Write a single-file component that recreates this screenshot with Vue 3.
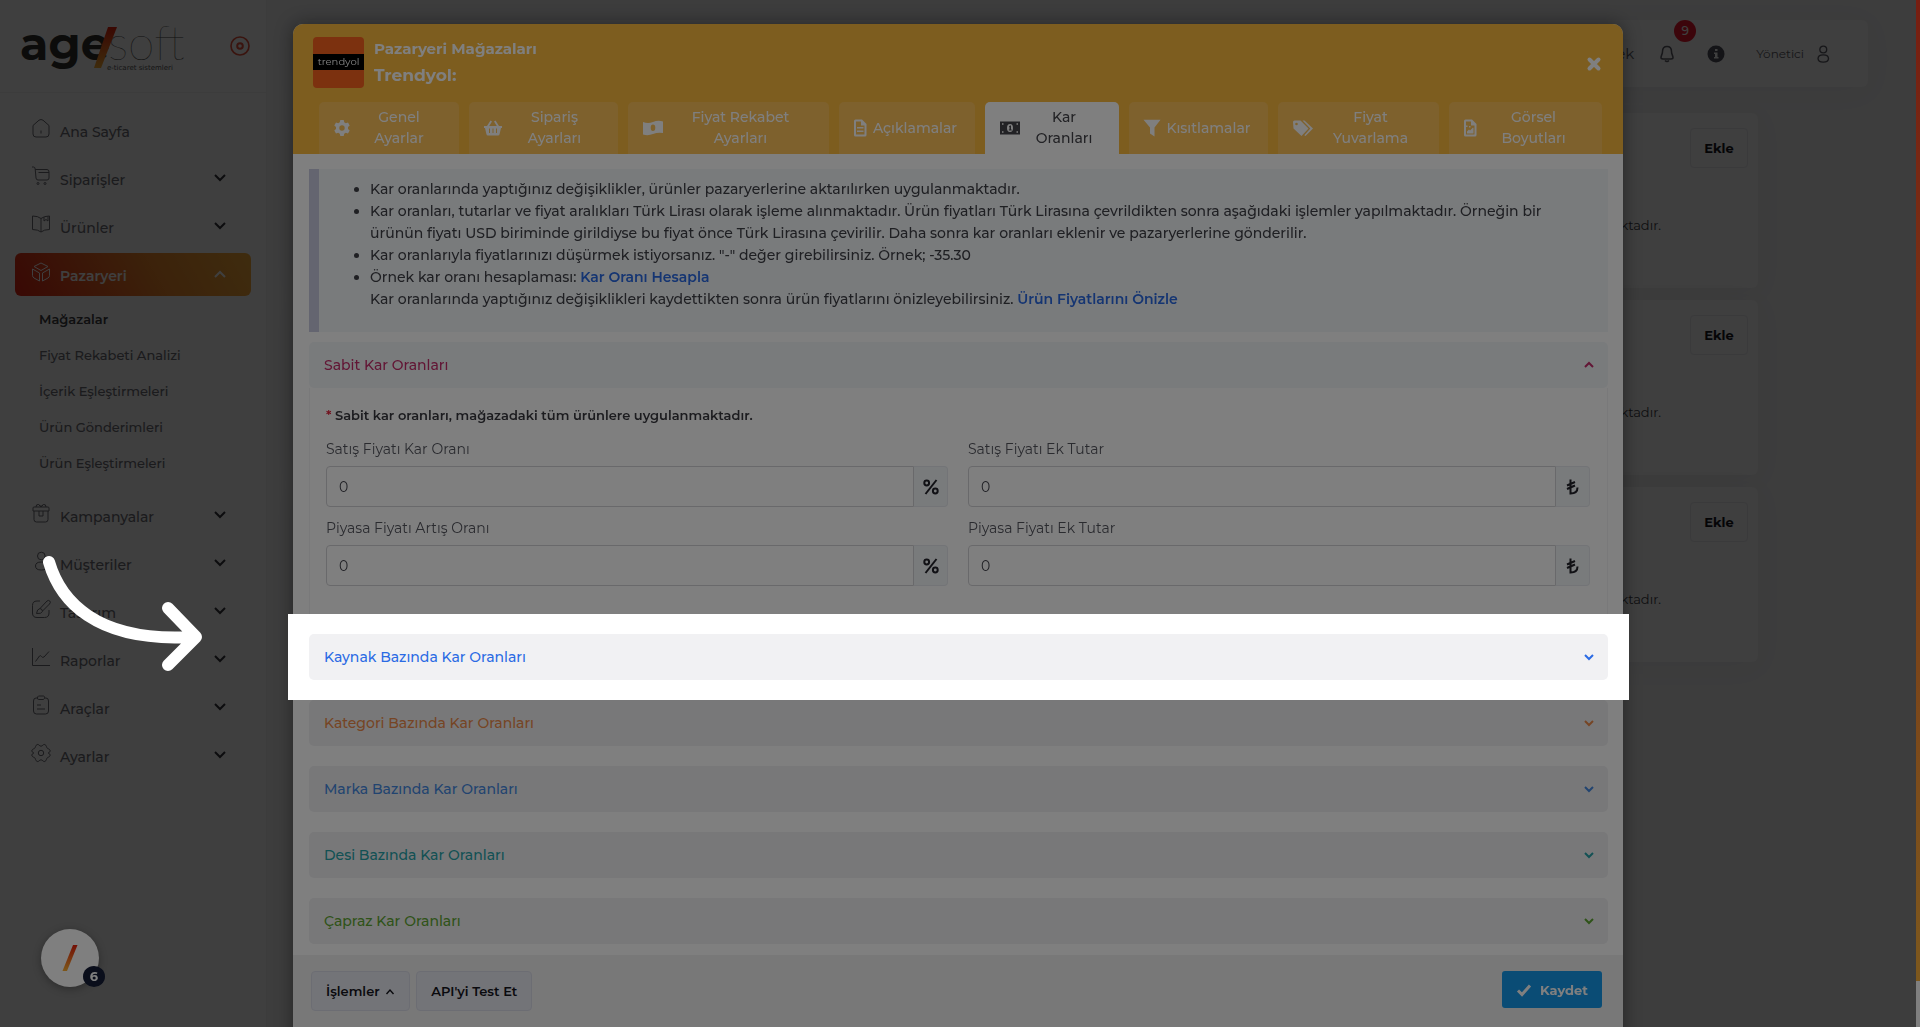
<script setup>
import { ref } from 'vue'

const menuTop = [
  { label: 'Ana Sayfa', icon: 'home' },
  { label: 'Siparişler', icon: 'cart', arrow: 'down' },
  { label: 'Ürünler', icon: 'book', arrow: 'down' },
  { label: 'Pazaryeri', icon: 'box', arrow: 'up', active: true },
]
const subMenu = ['Mağazalar', 'Fiyat Rekabeti Analizi', 'İçerik Eşleştirmeleri', 'Ürün Gönderimleri', 'Ürün Eşleştirmeleri']
const menuBottom = [
  { label: 'Kampanyalar', icon: 'gift', arrow: 'down' },
  { label: 'Müşteriler', icon: 'user', arrow: 'down' },
  { label: 'Tasarım', icon: 'brush', arrow: 'down' },
  { label: 'Raporlar', icon: 'chart', arrow: 'down' },
  { label: 'Araçlar', icon: 'clip', arrow: 'down' },
  { label: 'Ayarlar', icon: 'gear', arrow: 'down' },
]
const lineIcons = {
  home: 'M2 7.500 8 2.200Q10 .8 12 2.200L18 7.500V16Q18 19 15 19H5Q2 19 2 16ZM10 12.500V15.500',
  cart: 'M1 1H2.500Q4 1 4.200 3L5 12Q5.200 14 7 14H16Q18 14 18 12V6Q18 3.500 16 3.500H4.300M7.500 6.500H18M6 17.500a1 1 0 1 0 2 0a1 1 0 1 0-2 0M13 17.500a1 1 0 1 0 2 0a1 1 0 1 0-2 0',
  book: 'M10 4.500Q7 2 1.500 2V15.500Q7 15.500 10 18Q13 15.500 18.500 15.500V2Q13 2 10 4.500V18M13 3V7L15 5.500 17 7V2.500',
  box: 'M10 1 17 4.500 10 8.500 3 4.500ZM1.500 7 8.500 11V19L3 16Q1.500 15 1.500 13.500ZM18.500 7 11.500 11V19L17 16Q18.500 15 18.500 13.500Z',
  gift: 'M2 8H18V5Q18 4 17 4H3Q2 4 2 5ZM3 8V16.500Q3 19 5.500 19H14.500Q17 19 17 16.500V8M8 8V13H12V8M5 4Q5 1 7.500 1.500L10 4 12.500 1.500Q15 1 15 4M8 1.500 10 3.500 12 1.500',
  user: 'M6.500 5a3.800 3.800 0 1 0 7.600 0a3.800 3.800 0 1 0-7.600 0M4.500 15q0-4 5.800-4t5.800 4t-5.800 4t-5.800-4',
  brush: 'M9 2H6Q1.500 2 1.500 6.500V14Q1.500 18.500 6 18.500H13.500Q18 18.500 18 14V11M9 9.500 16 2Q17.500 .8 18.800 2T18.500 5L11.500 12M9 9.500Q11.500 10 11.500 12.500Q10.500 15 5.500 14.500Q6 10 9 9.500Z',
  chart: 'M1.500 1V18.500H19M4.500 14.500 8.500 9Q9.500 8 10.500 9.500T13 10L18 4.500',
  clip: 'M6.500 3H5Q2.500 3 2.500 6V16Q2.500 19 5.500 19H14.500Q17.500 19 17.500 16V6Q17.500 3 15 3H13.500M7.500 1H12.500Q13.500 1 13.500 2.500T12.500 4.500H7.500Q6.500 4.500 6.500 3T7.500 1ZM6 10H10M6 14H14',
  gear: 'M7.300 10a2.700 2.700 0 1 0 5.400 0a2.700 2.700 0 1 0-5.400 0M6.200 1.500C8 1 8.300 3.200 10 3.200S12 1 13.800 1.500S15.600 5.300 16.700 5.600S19.200 6.500 19.200 8S17.300 9 17.300 10S19.200 10.500 19.200 12S17.700 14.100 16.700 14.400S15.500 18 13.800 18.500S11.700 16.800 10 16.800S8 19 6.200 18.500S4.400 14.700 3.300 14.400S.8 13.500 .8 12S2.700 11 2.700 10S.8 9.500 .8 8S2.300 5.900 3.300 5.600S4.500 2 6.200 1.500Z',
}

const tabs = [
  { lines: ['Genel', 'Ayarlar'], icon: 'cog', w: 140 },
  { lines: ['Sipariş', 'Ayarları'], icon: 'basket', w: 149 },
  { lines: ['Fiyat Rekabet', 'Ayarları'], icon: 'money', w: 201 },
  { lines: ['Açıklamalar'], icon: 'file', w: 136 },
  { lines: ['Kar', 'Oranları'], icon: 'bill', w: 134, active: true },
  { lines: ['Kısıtlamalar'], icon: 'funnel', w: 139 },
  { lines: ['Fiyat', 'Yuvarlama'], icon: 'tags', w: 161 },
  { lines: ['Görsel', 'Boyutları'], icon: 'image', w: 153 },
]
const solidIcons = {
  cog: { w: 18, d: 'M7.300 1H10.700L11.200 3.300 12.800 4.200 15 3.500 16.700 6.400 15 8V10L16.700 11.600 15 14.500 12.800 13.800 11.200 14.700 10.700 17H7.300L6.800 14.700 5.200 13.800 3 14.500 1.300 11.600 3 10V8L1.300 6.400 3 3.500 5.200 4.200 6.800 3.300ZM9 6.300a2.700 2.700 0 1 0 0 5.400a2.700 2.700 0 1 0 0-5.400Z' },
  basket: { w: 20, d: 'M4 7 7.500 1.500 9 2.500 6.200 7H13.800L11 2.500 12.500 1.500 16 7H19V9H18L16.600 15Q16.400 16.500 15 16.500H5Q3.600 16.500 3.400 15L2 9H1V7ZM6 9.500V14H7V9.500ZM9.500 9.500V14H10.500V9.500ZM13 9.500V14H14V9.500Z' },
  money: { w: 22, d: 'M1 3Q6 5 11 3T21 2.500V14Q16 13 11 15T1 15.500ZM11 5.500a2.300 3.200 0 1 0 0 6.400a2.300 3.200 0 1 0 0-6.400Z' },
  file: { w: 14, d: 'M2.500 .5H9L13.500 5V16Q13.500 17.500 12 17.500H2.500Q1 17.500 1 16V2Q1 .5 2.500 .5ZM3 2.500V15.500H11.500V6.500H8V2.500ZM4 8H10.500V9.500H4ZM4 11.500H10.500V13H4Z' },
  bill: { w: 22, d: 'M1 2.500H21V15.500H1ZM11 5a3 4 0 1 0 0 8a3 4 0 1 0 0-8ZM10 7.500 11 6.500H12V10.500H12.800V11.500H9.800V10.500H10.500V8H10ZM3 4.300V5.800H4.500V4.300ZM3 12.200V13.700H4.500V12.200ZM17.500 4.300V5.800H19V4.300ZM17.500 12.200V13.700H19V12.200Z' },
  funnel: { w: 18, d: 'M.5 .8H17.500L11.500 8.500V17.500L7 14.500V8.500Z' },
  tags: { w: 22, d: 'M1 3Q1 1.500 2.500 1.500H8.500L16.500 9.500 9.500 17 1.500 9.500ZM4.500 3.700a1.300 1.300 0 1 0 0 2.600a1.300 1.300 0 1 0 0-2.600ZM10.500 1.500H12.500L21 9.500 13.500 17 12.300 16.200 18.300 9.500Z' },
  image: { w: 14, d: 'M2.500 .5H9L13.500 5V16Q13.500 17.500 12 17.500H2.500Q1 17.500 1 16V2Q1 .5 2.500 .5ZM3 2.500V6.500H4.500V8H3V15.500H11.500V6.500H8V2.500ZM4 12.500 6 10.500 7 11.500 10 8.500 10.500 9V14.500H4ZM6 7H7.500V8.500H6Z' },
}

const fields = ref([
  { id: 'sale-rate', label: 'Satış Fiyatı Kar Oranı', unit: 'percent', value: '0' },
  { id: 'sale-extra', label: 'Satış Fiyatı Ek Tutar', unit: 'lira', value: '0' },
  { id: 'market-rate', label: 'Piyasa Fiyatı Artış Oranı', unit: 'percent', value: '0' },
  { id: 'market-extra', label: 'Piyasa Fiyatı Ek Tutar', unit: 'lira', value: '0' },
])
const sections = [
  { label: 'Kaynak Bazında Kar Oranları', tone: 'blue', spot: true },
  { label: 'Kategori Bazında Kar Oranları', tone: 'orange' },
  { label: 'Marka Bazında Kar Oranları', tone: 'sky' },
  { label: 'Desi Bazında Kar Oranları', tone: 'teal' },
  { label: 'Çapraz Kar Oranları', tone: 'green' },
]
</script>

<template>
  <div class="shell">
    <aside class="sidebar">
      <div class="brand">
        <svg class="logo" width="172" height="66" viewBox="0 -7 172 66">
          <defs>
            <linearGradient id="slash" x1="0" y1="0" x2="0" y2="1">
              <stop offset="0" stop-color="#e8200c" />
              <stop offset="1" stop-color="#fbb033" />
            </linearGradient>
          </defs>
          <text x="0" y="40" class="logo-bold">age</text>
          <text x="88" y="40" class="logo-thin">soft</text>
          <path d="M88 7H97L81 48H74Z" fill="url(#slash)" />
          <text x="87" y="50" class="logo-tag">e-ticaret sistemleri</text>
        </svg>
        <svg width="20" height="20" viewBox="0 0 20 20" fill="none" stroke="#e8503a">
          <circle cx="10" cy="10" r="9" stroke-width="1.600" />
          <circle cx="10" cy="10" r="2.800" stroke-width="2" />
        </svg>
      </div>
      <nav class="menu">
        <a v-for="m in menuTop" :key="m.label" href="#" class="item" :class="{ active: m.active }">
          <svg class="mi" viewBox="0 0 20 20"><path :d="lineIcons[m.icon]" /></svg>
          <span>{{ m.label }}</span>
          <svg v-if="m.arrow" class="chev" viewBox="0 0 14 10"><path :d="m.arrow === 'up' ? 'M2 8 7 3 12 8' : 'M2 2 7 7 12 2'" /></svg>
        </a>
        <div class="sub">
          <a v-for="(s, i) in subMenu" :key="s" href="#" :class="{ current: i === 0 }">{{ s }}</a>
        </div>
        <a v-for="m in menuBottom" :key="m.label" href="#" class="item">
          <svg class="mi" viewBox="0 0 20 20"><path :d="lineIcons[m.icon]" /></svg>
          <span>{{ m.label }}</span>
          <svg class="chev" viewBox="0 0 14 10"><path d="M2 2 7 7 12 2" /></svg>
        </a>
      </nav>
    </aside>

    <main class="main">
      <header class="topbar">
        <a href="#" class="support">Destek</a>
        <button class="bell" aria-label="Bildirimler">
          <svg width="16" height="18" viewBox="0 0 16 18"><path d="M8 1.500C4.500 1.500 3.500 4 3.500 6.500C3.500 9.500 2 10.500 2 12.500Q2 14 4 14H12Q14 14 14 12.500C14 10.500 12.500 9.500 12.500 6.500C12.500 4 11.500 1.500 8 1.500ZM6 15.500Q8 17.500 10 15.500" /></svg>
          <span class="count">9</span>
        </button>
        <svg class="info-i" width="18" height="18" viewBox="0 0 18 18"><circle cx="9" cy="9" r="8.500" fill="#50535f" /><path d="M8 4H10.500V6H8ZM7 7.500H10.500V12H11.500V13.500H7V12H8V9H7Z" fill="#fff" /></svg>
        <a href="#" class="account">Yönetici
          <svg width="18" height="18" viewBox="0 0 20 20"><path :d="lineIcons.user" /></svg>
        </a>
      </header>
      <section v-for="n in 3" :key="n" class="store">
        <button class="add">Ekle</button>
        <p>uygulanmaktadır.</p>
      </section>
    </main>
  </div>

  <div class="backdrop"></div>

  <button class="chat" aria-label="Destek">
    <svg width="16" height="28" viewBox="0 0 16 28"><path d="M11 1H15.500L5 27H.5Z" fill="url(#slash)" /></svg>
    <span class="chat-count">6</span>
  </button>
  <div class="scroll"><div class="thumb"></div></div>

  <div class="overlay">
    <div class="modal" role="dialog" aria-label="Pazaryeri Mağazaları">
      <header class="head">
        <div class="title-row">
          <div class="tlogo"><span>trendyol</span></div>
          <div class="titles">
            <h2>Pazaryeri Mağazaları</h2>
            <h1>Trendyol:</h1>
          </div>
          <button class="close" aria-label="Kapat">
            <svg width="16" height="16" viewBox="0 0 16 16"><path d="M3.500 3.500 12.500 12.500M12.500 3.500 3.500 12.500" /></svg>
          </button>
        </div>
        <nav class="tabs">
          <button v-for="t in tabs" :key="t.icon" class="tab" :class="{ on: t.active }" :style="{ flexBasis: t.w + 'px' }">
            <svg :width="solidIcons[t.icon].w" height="18" :viewBox="`0 0 ${solidIcons[t.icon].w} 18`"><path fill-rule="evenodd" :d="solidIcons[t.icon].d" /></svg>
            <span class="tab-text"><span v-for="l in t.lines" :key="l">{{ l }}</span></span>
          </button>
        </nav>
      </header>

      <div class="body">
        <div class="notice">
          <ul>
            <li>Kar oranlarında yaptığınız değişiklikler, ürünler pazaryerlerine aktarılırken uygulanmaktadır.</li>
            <li>Kar oranları, tutarlar ve fiyat aralıkları Türk Lirası olarak işleme alınmaktadır. Ürün fiyatları Türk Lirasına çevrildikten sonra aşağıdaki işlemler yapılmaktadır. Örneğin bir<br>ürünün fiyatı USD biriminde girildiyse bu fiyat önce Türk Lirasına çevirilir. Daha sonra kar oranları eklenir ve pazaryerlerine gönderilir.</li>
            <li>Kar oranlarıyla fiyatlarınızı düşürmek istiyorsanız. "-" değer girebilirsiniz. Örnek; -35.30</li>
            <li>Örnek kar oranı hesaplaması: <a href="#">Kar Oranı Hesapla</a><br>Kar oranlarında yaptığınız değişiklikleri kaydettikten sonra ürün fiyatlarını önizleyebilirsiniz. <a href="#">Ürün Fiyatlarını Önizle</a></li>
          </ul>
        </div>

        <section class="fixed-rates">
          <button class="bar pink open">Sabit Kar Oranları
            <svg class="bchev" viewBox="0 0 12 8"><path d="M2 6 6 2 10 6" /></svg>
          </button>
          <div class="panel">
            <p class="hint"><span>*</span> Sabit kar oranları, mağazadaki tüm ürünlere uygulanmaktadır.</p>
            <div class="grid">
              <div v-for="f in fields" :key="f.id" class="field">
                <label :for="f.id">{{ f.label }}</label>
                <div class="group">
                  <input :id="f.id" v-model="f.value" type="text">
                  <span v-if="f.unit === 'percent'" class="unit pct">
                    <svg width="18" height="18" viewBox="0 0 18 18"><path d="M14.500 2 3.500 16" /><circle cx="4.700" cy="5" r="2.400" /><circle cx="13.300" cy="13" r="2.400" /></svg>
                  </span>
                  <span v-else class="unit">
                    <svg width="14" height="18" viewBox="0 0 14 18"><path d="M4.500 1.500V15.500Q11.500 15.500 11.500 9.500M1 7.500 9 4M1 11 9 7.500" /></svg>
                  </span>
                </div>
              </div>
            </div>
          </div>
        </section>

        <div class="sections">
          <div v-for="s in sections" :key="s.label" class="section" :class="{ spot: s.spot }">
            <button class="bar" :class="s.tone">{{ s.label }}
              <svg class="bchev" viewBox="0 0 12 8"><path d="M2 2 6 6 10 2" /></svg>
            </button>
          </div>
        </div>
      </div>

      <footer class="foot">
        <button class="ghost">İşlemler <svg width="10" height="8" viewBox="0 0 10 8"><path d="M1.500 6 5 2 8.500 6" /></svg></button>
        <button class="ghost">API'yi Test Et</button>
        <button class="save"><svg width="16" height="14" viewBox="0 0 16 14"><path d="M2 7.500 6 11.500 14 2.500" /></svg>Kaydet</button>
      </footer>
    </div>
  </div>

  <svg class="arrow" width="180" height="130" viewBox="0 0 180 130">
    <path d="M22 19C33 57 68 99 163 94M141 65 169 94 141 122" />
  </svg>
</template>

<style>
body { margin: 0; background: #f4f4f5; overflow: hidden; }
#app { font-family: Montserrat, Inter, "Noto Sans", sans-serif; font-size: 14px; color: #3f4047; }
#app button { font-family: inherit; cursor: pointer; }
#app a { text-decoration: none; }
</style>

<style scoped>
* { box-sizing: border-box; }
.shell { display: flex; min-height: 100vh; padding-right: 4px; }
.sidebar { width: 267px; flex: none; background: #fcfcfc; border-right: 1px solid #f0f0f0; }
.brand { height: 93px; padding: 0 16px 0 20px; display: flex; align-items: center; justify-content: space-between; border-bottom: 1px solid #f0f0f0; }
.logo { overflow: visible; }
.logo-bold { font: 700 46px Montserrat, Inter, sans-serif; fill: #33332f; }
.logo-thin { font: 100 48px Lato, Inter, sans-serif; fill: #4a4a48; }
.logo-tag { font: 400 7px "DejaVu Sans", sans-serif; fill: #5a5a5a; }
.menu { padding: 16px 15px 0; display: flex; flex-direction: column; gap: 5px; }
.item { height: 43px; padding: 0 24px 0 16px; display: flex; align-items: center; color: #6c6c74; font-size: 14px; font-weight: 500; border-radius: 6px; }
.item span { flex: 1; padding: 3px 0 0 9px; }
.mi { width: 20px; height: 20px; margin-bottom: 5px; fill: none; stroke: currentColor; stroke-width: 1; }
.chev { width: 14px; height: 10px; margin-bottom: 2px; fill: none; stroke: #33333a; stroke-width: 2; }
.item.active { background: linear-gradient(60deg, #e42313, #f08a2c 60%, #fbb03b); color: #fff; font-weight: 600; }
.item.active .chev { stroke: #fff; }
.sub { display: flex; flex-direction: column; padding: 0 24px 8px; }
.sub a { line-height: 36px; font-size: 13px; font-weight: 500; color: #6c6c74; }
.sub a.current { font-weight: 600; color: #3c3c42; }
.main { flex: 1; padding: 20px 48px 0 30px; }
.topbar { height: 67px; background: #fcfcfc; border-radius: 6px; box-shadow: 0 4px 30px rgba(0, 0, 0, .04); display: flex; align-items: center; justify-content: flex-end; padding-right: 36px; margin-bottom: 26px; }
.topbar svg { fill: none; stroke: #5c5c66; stroke-width: 1.5; }
.topbar .info-i { stroke: none; margin: 0 31px 0 32px; }
.support { color: #5c5c66; font-size: 15px; margin-right: 25px; }
.bell { position: relative; border: 0; padding: 0; background: none; display: flex; }
.count { position: absolute; left: 15px; top: -25px; width: 22px; height: 22px; border-radius: 50%; background: #f0152c; color: #fff; font-size: 12px; font-weight: 500; line-height: 22px; text-align: center; }
.account { display: flex; align-items: center; gap: 10px; color: #5c5c66; font-size: 12px; }
.store { height: 175px; margin: 0 110px 12px 0; padding: 15px 10px; background: #fcfcfc; border-radius: 6px; box-shadow: 0 4px 30px rgba(0, 0, 0, .04); display: flex; flex-direction: column; align-items: flex-end; }
.store p { margin: 47px 87px 0 0; line-height: 20px; font-size: 13px; }
.add { width: 58px; height: 40px; border: 1px solid #eaeaee; border-radius: 4px; background: #fcfcfc; font-size: 13px; font-weight: 700; color: #15151c; padding: 0; }
.backdrop { position: fixed; inset: 0; background: rgba(0, 0, 0, .5); }
.chat { position: fixed; left: 41px; bottom: 40px; width: 58px; height: 58px; border: 0; border-radius: 50%; background: #fff; display: flex; align-items: center; justify-content: center; padding: 0; box-shadow: 0 2px 8px rgba(0, 0, 0, .3); }
.chat-count { position: absolute; right: -6px; bottom: 0; width: 22px; height: 21px; border-radius: 50%; background: #141c36; color: #fff; font-size: 13px; line-height: 21px; font-weight: 700; }
.scroll { position: fixed; top: 0; right: 0; bottom: 0; width: 4px; background: #fff; }
.thumb { height: 95.5%; background: linear-gradient(#ee3c22, #fbb03b); }
.overlay { position: fixed; inset: 0; overflow: hidden; padding: 24px 4px 0 0; }
.modal { width: min(1330px, 94%); margin: 0 auto; background: #fff; border-radius: 10px; box-shadow: 0 0 18px rgba(0, 0, 0, .4); }
.head { background: #fbbb3f; border-radius: 10px 10px 0 0; padding: 0 21px 0 26px; }
.title-row { height: 78px; padding-bottom: 2px; display: flex; align-items: center; color: #fff; }
.tlogo { width: 51px; height: 51px; margin-left: -6px; border-radius: 4px; background: #f8621f; display: flex; align-items: center; }
.tlogo span { width: 100%; background: #000; color: #fff; font-size: 10px; line-height: 16px; text-align: center; }
.titles { flex: 1; margin-left: 10px; }
.titles h2, .titles h1 { margin: 0; line-height: 27px; font-weight: 700; }
.titles h2 { font-size: 15px; }
.titles h1 { font-size: 17px; }
.close { border: 0; background: none; padding: 4px 0 0; display: flex; }
.close svg { stroke: #fff; stroke-width: 4; stroke-linecap: round; }
.tabs { display: flex; gap: 10px; }
.tab { flex: 1 1 0; min-width: 0; height: 52px; border: 0; border-radius: 5px 5px 0 0; background: #fcc25b; color: #fff; padding: 0 12px 0 14px; display: flex; align-items: center; font-size: 14px; font-weight: 500; line-height: 21px; }
.tab svg { flex: none; fill: currentColor; }
.tab-text { flex: 1; display: flex; flex-direction: column; white-space: nowrap; text-align: center; }
.tab.on { background: #fff; color: #44444a; }
.body { padding: 15px 15px 11px 16px; }
.notice { border-left: 10px solid #c9cae0; background: #f3f6f9; height: 163px; padding: 9px 16px; }
.notice ul { margin: 0; padding-left: 35px; line-height: 22px; font-weight: 500; }
.notice a { color: #2b6be4; font-weight: 600; }
.fixed-rates { margin-top: 10px; }
.bar { width: 100%; height: 46px; border: 0; border-radius: 5px; background: #f1f1f3; padding: 0 13px 0 15px; display: flex; align-items: center; justify-content: space-between; font-size: 14px; font-weight: 500; text-align: left; }
.bar.open { background: #f3f6f9; }
.bchev { width: 12px; height: 8px; fill: none; stroke: currentColor; stroke-width: 2; }
.pink { color: #c42c6a; }
.blue { color: #2b6be4; }
.orange { color: #ec8b4a; }
.sky { color: #4488e0; }
.teal { color: #26a2a8; }
.green { color: #5fa632; }
.panel { border: 1px solid #f3f3f5; border-top: 0; padding: 17px 17px 47px 16px; }
.hint { margin: 0 0 14px; line-height: 20px; font-size: 13px; font-weight: 600; color: #38383f; }
.hint span { color: #e4203a; }
.grid { display: grid; grid-template-columns: 1fr 1fr; gap: 11px 20px; }
.field label { display: block; line-height: 20px; margin-bottom: 7px; color: #55565f; }
.group { display: flex; height: 41px; }
.group input { flex: 1; min-width: 0; border: 1px solid #d2d2d6; border-radius: 4px 0 0 4px; background: #fff; padding: 0 12px; font-family: inherit; font-size: 14px; color: #44454e; }
.unit { width: 34px; display: flex; align-items: center; justify-content: center; border: 1px solid #e6e9ee; border-left: 0; border-radius: 0 4px 4px 0; background: #f3f6f9; }
.unit svg { fill: none; stroke: #22222a; stroke-width: 2; }
.sections { display: flex; flex-direction: column; gap: 20px; }
.section { position: relative; }
.spot .bar { position: relative; z-index: 6; }
.spot::before { content: ""; position: absolute; z-index: 5; inset: -20px -21px; background: #fff; box-shadow: 0 0 0 4000px rgba(0, 0, 0, .5); }
.foot { background: #f1f1f1; padding: 16px 21px 16px 18px; display: flex; gap: 6px; align-items: flex-start; height: 90px; }
.ghost { height: 40px; border: 1px solid #d9dbe6; border-radius: 4px; background: #e6e8f0; padding: 0 14px; font-size: 13px; font-weight: 600; color: #15151c; }
.ghost svg { fill: none; stroke: #15151c; stroke-width: 1.4; margin-left: 2px; }
.save { margin-left: auto; width: 100px; height: 37px; border: 0; border-radius: 3px; background: #1498ea; color: #fff; font-size: 13px; font-weight: 700; display: flex; align-items: center; justify-content: center; gap: 8px; padding: 0; }
.save svg { fill: none; stroke: #fff; stroke-width: 3; }
.arrow { position: fixed; left: 27px; top: 543px; z-index: 7; fill: none; stroke: #fff; stroke-width: 12; stroke-linecap: round; stroke-linejoin: round; }
</style>
